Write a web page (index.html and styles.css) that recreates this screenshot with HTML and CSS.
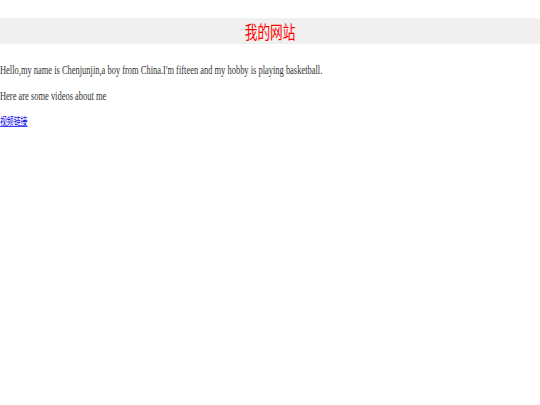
FILE: index.html
```html
<!DOCTYPE html>
<html lang="zh">
<head>
<meta charset="utf-8">
<title>我的网站</title>
<link rel="stylesheet" href="styles.css">
</head>
<body>
<div class="viewport">
  <div class="page">
    <div class="header">我的网站</div>
    <p class="intro first">Hello,my name is Chenjunjin,a boy from China.I'm fifteen and my hobby is playing basketball.</p>
    <p class="intro">Here are some videos about me</p>
    <p class="intro"><a href="#" class="link">视频链接</a></p>
  </div>
</div>
</body>
</html>
```
FILE: styles.css
```css
html, body {
  margin: 0;
  padding: 0;
  background: #ffffff;
  overflow: hidden;
}
.viewport {
  width: 540px;
  height: 405px;
  overflow: hidden;
}
.page {
  width: 1023px;
  height: 533px;
  transform: scale(0.528, 0.76);
  transform-origin: 0 0;
  font-family: "Liberation Serif", "Noto Sans CJK SC", serif;
  font-size: 16px;
  color: #333;
  padding-top: 24px;
  box-sizing: border-box;
}
.header {
  background: #f0f0f0;
  color: #ff0000;
  text-align: center;
  font-family: "Noto Sans CJK SC", sans-serif;
  font-size: 24px;
  height: 34px;
  line-height: 34px;
}
.intro {
  margin: 16px 0;
  line-height: 18px;
}
.intro.first {
  margin-top: 25px;
}
.link {
  color: #0000ee;
  font-size: 13px;
  font-family: "Noto Sans CJK SC", sans-serif;
}
```
